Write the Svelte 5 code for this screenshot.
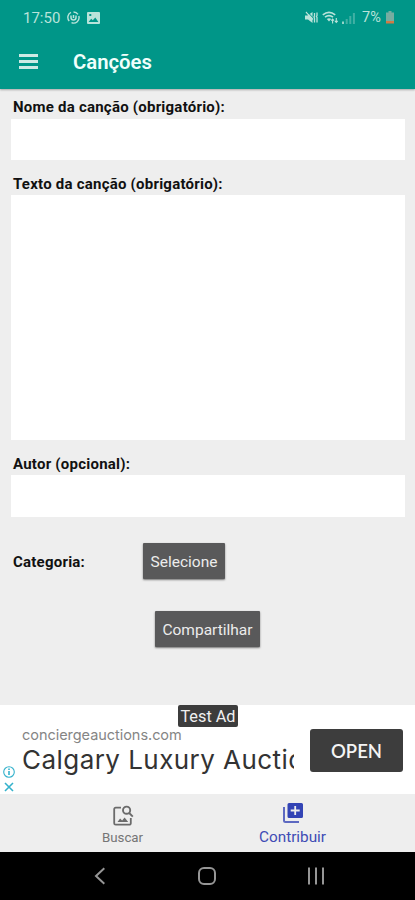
<script lang="ts">
	let name = $state('');
	let text = $state('');
	let author = $state('');
</script>

<div class="screen">
	<header>
		<div class="status">
			<span class="clock">17:50</span>
			<svg class="ring" width="13" height="13" viewBox="0 0 13 13" fill="none" stroke="currentColor">
				<path d="M4 1.4A5.5 5.5 0 0 0 2.2 10M4.5 11.7A5.5 5.5 0 0 0 11.8 5M6.5 1A5.5 5.5 0 0 1 11 3.4" stroke-width="1.4" />
				<path d="M4 4.4v2.2a2.5 2.5 0 0 0 5 0V4.6M6.5 4v3" stroke-width="1.5" />
			</svg>
			<svg class="photo" width="13" height="12" viewBox="0 0 13 12">
				<path
					fill="currentColor"
					fill-rule="evenodd"
					d="M1 0h11a1 1 0 0 1 1 1v10a1 1 0 0 1-1 1H1a1 1 0 0 1-1-1V1a1 1 0 0 1 1-1ZM1.6 10h9.8L8.3 5.4 5.8 8.3 4.2 6.8ZM2.3 2v2h2V2Z"
				/>
			</svg>
			<span class="grow"></span>
			<svg class="mute" width="13" height="13" viewBox="0 0 13 13">
				<path d="M0 4.5h2.5L7.5 1v11L3 8.5H0Z" fill="currentColor" />
				<path d="m1 1 7 7.5" stroke="currentColor" stroke-width="1.2" />
				<path d="m2.4 .8 5.6 6" stroke="#009688" stroke-width="1" />
				<path d="M9.5 2v3l-.6 1 .6 1v4.5M12 1.5v3l-.6 1 .6 1v5" fill="none" stroke="currentColor" stroke-width="1.3" />
			</svg>
			<svg class="wifi" width="17" height="13" viewBox="0 0 17 13" fill="none" stroke="currentColor">
				<path d="M.8 3.8Q7-1.2 13.2 3.8M3 6.2Q7 3 11 6.2" stroke-width="1.7" />
				<path d="M4.8 8Q7 6.3 9.2 8L7 10.6Z" fill="currentColor" stroke="none" />
				<path d="M10.6 12.5V8M9.2 9.6l1.4-1.6L12 9.6M14.3 7v4.5M12.9 9.9l1.4 1.6 1.4-1.6" stroke-width="1.1" />
			</svg>
			<svg class="signal" width="13" height="12" viewBox="0 0 13 12" fill="currentColor">
				<path d="M0 9.5h2V12H0Z" opacity=".8" />
				<path d="M3.7 7h2v5h-2ZM7.3 4h2v8h-2ZM10.9 1h2v11h-2Z" opacity=".35" />
			</svg>
			<span class="percent">7%</span>
			<svg width="8" height="13" viewBox="0 0 8 13">
				<path d="M2.5 0h3v1.5H8V10H0V1.5h2.5Z" fill="#76ada1" />
				<path d="M0 10h8v2.5H0Z" fill="#cf7b45" />
			</svg>
		</div>
		<div class="appbar">
			<button class="menu" aria-label="Menu">
				<span></span><span></span><span></span>
			</button>
			<h1>Canções</h1>
		</div>
	</header>

	<main>
		<label for="name" class="l-name">Nome da canção (obrigatório):</label>
		<input id="name" bind:value={name} />
		<label for="text" class="l-text">Texto da canção (obrigatório):</label>
		<textarea id="text" bind:value={text}></textarea>
		<label for="author" class="l-author">Autor (opcional):</label>
		<input id="author" bind:value={author} />
		<div class="category">
			<span class="label">Categoria:</span>
			<button class="raised select">Selecione</button>
		</div>
		<button class="raised share">Compartilhar</button>
	</main>

	<section class="ad">
		<div class="choices">
			<svg width="12" height="12" viewBox="0 0 12 12" fill="none" stroke="#35b2cc">
				<circle cx="6" cy="6" r="5.3" stroke-width="1.1" />
				<path d="M6 5v4M6 2.6v1.3" stroke-width="1.6" />
			</svg>
			<svg width="10" height="10" viewBox="0 0 10 10" stroke="#35b2cc" stroke-width="1.6">
				<path d="m1 1 8 8M9 1 1 9" />
			</svg>
		</div>
		<div class="copy">
			<div class="domain">conciergeauctions.com</div>
			<div class="headline">Calgary Luxury Auctions</div>
		</div>
		<button class="open">OPEN</button>
		<span class="test">Test Ad</span>
	</section>

	<nav>
		<button class="tab">
			<svg width="22" height="22" viewBox="0 0 22 22" fill="none" stroke="#6b6b6b">
				<path d="M9 2.7H3.7A1.5 1.5 0 0 0 2.2 4.2v14a1.5 1.5 0 0 0 1.5 1.5h13.6a1.5 1.5 0 0 0 1.5-1.5V13" stroke-width="1.8" />
				<circle cx="14.6" cy="5.2" r="3.6" stroke-width="1.9" />
				<path d="m17.2 8 3.6 3.6" stroke-width="1.9" />
				<path d="m5.5 17 2.6-3.6 2 2.2 2.5-3.2 3.6 4.6Z" fill="#6b6b6b" stroke="none" />
			</svg>
			<span class="buscar">Buscar</span>
		</button>
		<button class="tab active">
			<svg width="22" height="22" viewBox="0 0 22 22">
				<path
					fill="#3344b5"
					fill-rule="evenodd"
					d="M7 1h12.5A1.5 1.5 0 0 1 21 2.5v12a1.5 1.5 0 0 1-1.5 1.5H7a1.5 1.5 0 0 1-1.5-1.5v-12A1.5 1.5 0 0 1 7 1Zm5.3 3v3.6H8.7v1.8h3.6V13h1.8V9.4h3.6V7.6h-3.6V4Z"
				/>
				<path d="M2 5v13.5A1.5 1.5 0 0 0 3.5 20H17" fill="none" stroke="#5d69c1" stroke-width="2" />
			</svg>
			<span class="contribuir">Contribuir</span>
		</button>
	</nav>

	<footer>
		<svg width="12" height="18" viewBox="0 0 12 18" fill="none" stroke="#969696" stroke-width="2">
			<path d="M10.3 1.3 2 9l8.3 7.7" />
		</svg>
		<svg width="18" height="18" viewBox="0 0 18 18" fill="none" stroke="#969696" stroke-width="2">
			<rect x="1" y="1" width="16" height="16" rx="5" />
		</svg>
		<svg width="18" height="18" viewBox="0 0 18 18" stroke="#969696" stroke-width="2">
			<path d="M2 .5v17M9 .5v17M16 .5v17" />
		</svg>
	</footer>
</div>

<style>
	:global(body) {
		margin: 0;
		background: #eeeeee;
	}
	.screen {
		display: flex;
		flex-direction: column;
		width: 415px;
		height: 900px;
		overflow: hidden;
		background: #eeeeee;
		font-family: Roboto, sans-serif;
		color: #111;
	}
	button {
		margin: 0;
		padding: 0;
		border: 0;
		background: none;
		font: inherit;
		color: inherit;
	}
	svg {
		display: block;
		flex: none;
	}

	header {
		height: 89px;
		flex: none;
		background: #009688;
		box-shadow: 0 1px 2px rgba(0, 0, 0, 0.3);
		color: #b9e3da;
	}
	.status {
		display: flex;
		align-items: center;
		height: 35px;
		padding: 0 21px 0 23px;
		font-size: 15px;
	}
	.clock {
		width: 44px;
	}
	.photo {
		margin-left: 7px;
	}
	.grow {
		flex: 1;
	}
	.wifi {
		margin-left: 4px;
	}
	.signal {
		margin-left: 3px;
	}
	.percent {
		width: 19px;
		margin: 0 5px 0 7px;
		font-size: 14.5px;
		line-height: 19px;
	}
	.appbar {
		display: flex;
		align-items: center;
		height: 53px;
	}
	.menu {
		display: grid;
		gap: 3px;
		width: 19px;
		margin: 0 35px 1px 19px;
	}
	.menu span {
		height: 3px;
		background: #cdeae5;
	}
	h1 {
		margin: 0;
		font-size: 20.3px;
		font-weight: 600;
		color: #f0fffc;
	}

	main {
		display: flex;
		flex-direction: column;
		height: 616px;
		flex: none;
		padding: 0 11px;
		box-sizing: border-box;
	}
	label,
	.label {
		padding-left: 2px;
		font-size: 15px;
		font-weight: 700;
		letter-spacing: 0.23px;
		white-space: nowrap;
	}
	.l-name {
		height: 30px;
		line-height: 37px;
	}
	.l-text {
		height: 35px;
		line-height: 49px;
	}
	.l-author {
		height: 35px;
		line-height: 48px;
	}
	input,
	textarea {
		display: block;
		width: 394px;
		height: 41px;
		margin: 0;
		padding: 8px;
		border: 0;
		box-sizing: border-box;
		background: #fff;
		font: 15px Roboto, sans-serif;
		resize: none;
	}
	textarea {
		height: 245px;
	}
	#author {
		height: 42px;
	}
	.category {
		display: flex;
		align-items: center;
		height: 36px;
		margin-top: 26px;
	}
	.category .label {
		width: 130px;
		padding-top: 1px;
	}
	.raised {
		height: 36px;
		padding-top: 2px;
		border-radius: 1px;
		background: #59595a;
		box-shadow: 0 1px 2px rgba(0, 0, 0, 0.5);
		color: #ececec;
		font-size: 15.5px;
	}
	.select {
		width: 82px;
	}
	.share {
		width: 105px;
		margin: 32px 0 0 144px;
	}

	.ad {
		position: relative;
		display: flex;
		height: 89px;
		flex: none;
		background: #fff;
	}
	.choices {
		display: flex;
		flex-direction: column;
		align-items: center;
		gap: 4px;
		width: 18px;
		padding-top: 61px;
	}
	.copy {
		width: 272px;
		margin-left: 4px;
		padding-top: 21px;
		overflow: hidden;
		white-space: nowrap;
	}
	.domain {
		font: 14.5px/17px Inter, sans-serif;
		letter-spacing: -0.04px;
		color: #858585;
	}
	.headline {
		font: 26px/33px Inter, sans-serif;
		letter-spacing: 0.45px;
		color: #333;
	}
	.open {
		width: 93px;
		height: 43px;
		margin: 24px 0 0 16px;
		border-radius: 3px;
		background: #3d3d3d;
		color: #f4f4f4;
		font: 600 18.5px Lato, sans-serif;
	}
	.test {
		position: absolute;
		top: 0;
		left: 178px;
		width: 60px;
		height: 22px;
		border-radius: 2px;
		background: #3c3c3c;
		color: #f0f0f0;
		font-size: 16.3px;
		line-height: 24px;
		text-align: center;
		white-space: nowrap;
	}

	nav {
		display: flex;
		justify-content: center;
		height: 58px;
		flex: none;
	}
	.tab {
		display: flex;
		flex-direction: column;
		align-items: center;
		width: 170px;
		padding-top: 11px;
		color: #757575;
		font-size: 13.3px;
	}
	.active {
		padding-top: 8px;
		color: #3f4cb5;
		font-size: 15.3px;
	}
	.buscar {
		margin-top: 3px;
	}
	.contribuir {
		margin-top: 4px;
	}

	footer {
		display: flex;
		align-items: center;
		justify-content: space-between;
		flex: 1;
		padding: 0 90px 0 94px;
		background: #000;
	}
</style>
